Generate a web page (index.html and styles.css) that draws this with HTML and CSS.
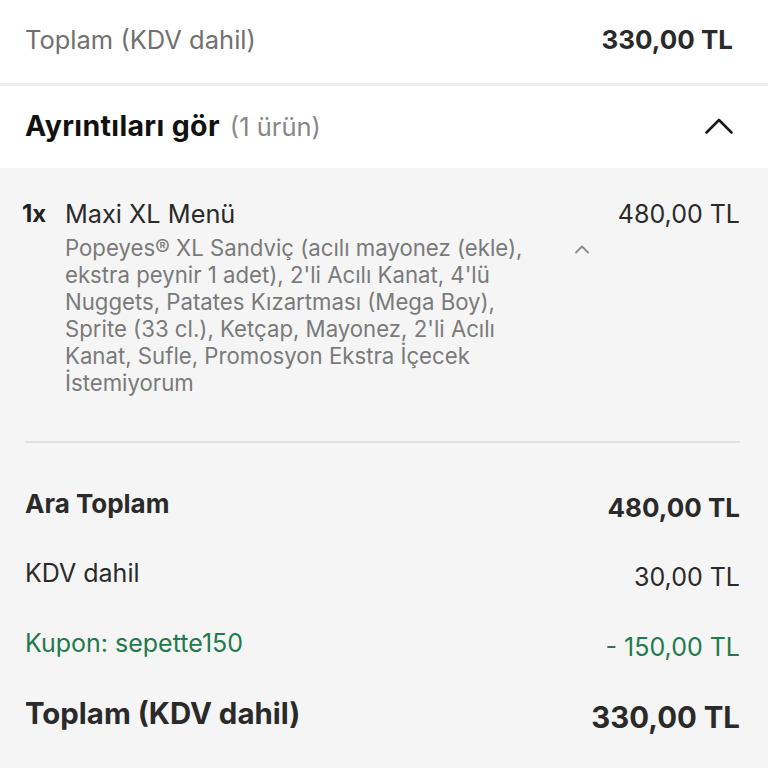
FILE: index.html
```html
<!DOCTYPE html>
<html lang="tr">
<head>
<meta charset="utf-8">
<link rel="stylesheet" href="styles.css">
</head>
<body>
<div class="page">
  <div class="top-row">
    <span class="top-label">Toplam (KDV dahil)</span>
    <span class="top-value">330,00 TL</span>
  </div>
  <div class="details-head">
    <div class="details-title"><span class="dt-strong">Ayrıntıları gör</span> <span class="dt-count">(1 ürün)</span></div>
    <svg class="chev-big" width="30" height="18" viewBox="0 0 30 18"><path d="M2.5 15.5 L15 3 L27.5 15.5" fill="none" stroke="#1a1a1a" stroke-width="2.6" stroke-linecap="round" stroke-linejoin="round"/></svg>
  </div>
  <div class="gray">
    <div class="item">
      <span class="qty">1x</span>
      <div class="item-body">
        <div class="item-name">Maxi XL Menü</div>
        <div class="item-desc-row">
          <div class="item-desc">Popeyes® XL Sandviç (acılı mayonez (ekle), ekstra peynir 1 adet), 2'li Acılı Kanat, 4'lü Nuggets, Patates Kızartması (Mega Boy), Sprite (33 cl.), Ketçap, Mayonez, 2'li Acılı Kanat, Sufle, Promosyon Ekstra İçecek İstemiyorum</div>
          <svg class="chev-small" width="18" height="12" viewBox="0 0 18 12"><path d="M3 9.5 L9 3.5 L15 9.5" fill="none" stroke="#8a8a8a" stroke-width="1.8" stroke-linecap="round" stroke-linejoin="round"/></svg>
        </div>
      </div>
      <span class="item-price">480,00 TL</span>
    </div>
    <div class="divider"></div>
    <div class="sum-row bold"><span>Ara Toplam</span><span class="val">480,00 TL</span></div>
    <div class="sum-row"><span>KDV dahil</span><span class="val">30,00 TL</span></div>
    <div class="sum-row green"><span>Kupon: sepette150</span><span class="val">- 150,00 TL</span></div>
    <div class="sum-row total"><span>Toplam (KDV dahil)</span><span class="val">330,00 TL</span></div>
  </div>
</div>
</body>
</html>
```
FILE: styles.css
```css
html, body {
  margin: 0;
  padding: 0;
  background: #f5f5f5;
}
body {
  font-family: Inter, Roboto, "Liberation Sans", sans-serif;
  color: #222;
  width: 768px;
  height: 768px;
  overflow: hidden;
}
.page {
  display: flex;
  flex-direction: column;
}
.top-row {
  background: #fff;
  height: 86px;
  display: flex;
  align-items: center;
  justify-content: space-between;
  padding: 0 35px 4px 25px;
  border-bottom: 3px solid #ececec;
  box-sizing: border-box;
}
.top-label {
  font-size: 25.5px;
  color: #707070;
}
.top-value {
  font-size: 26px;
  font-weight: 700;
  color: #2a2a2a;
}
.details-head {
  background: #fff;
  height: 82px;
  display: flex;
  align-items: center;
  justify-content: space-between;
  padding: 0 34px 4px 25px;
  box-sizing: border-box;
}
.details-title {
  font-size: 28.5px;
}
.dt-strong {
  font-weight: 700;
  color: #111;
  letter-spacing: 0.35px;
}
.dt-count {
  color: #888;
  font-size: 25.5px;
  margin-left: 2px;
}
.chev-big {
  margin-top: 2px;
}
.gray {
  background: #f5f5f5;
  padding: 31px 28px 0 25px;
  display: flex;
  flex-direction: column;
}
.item {
  display: flex;
  align-items: flex-start;
}
.qty {
  font-size: 24px;
  font-weight: 700;
  width: 43px;
  line-height: 30px;
  margin-left: -3px;
  color: #222;
}
.item-body {
  flex: 1;
}
.item-name {
  font-size: 25.3px;
  line-height: 30px;
  color: #2a2a2a;
}
.item-desc-row {
  display: flex;
  align-items: flex-start;
}
.item-desc {
  width: 490px;
  font-size: 22.2px;
  line-height: 27px;
  color: #7a7a7a;
  margin-top: 5px;
}
.chev-small {
  margin-left: 18px;
  margin-top: 14px;
}
.item-price {
  font-size: 25px;
  line-height: 30px;
  color: #2a2a2a;
}
.divider {
  height: 2px;
  background: #e0e0e0;
  margin-top: 45px;
  margin-bottom: 25px;
}
.sum-row {
  display: flex;
  justify-content: space-between;
  align-items: center;
  font-size: 25px;
  height: 70px;
  color: #2a2a2a;
}
.sum-row .val {
  padding-top: 8px;
}
.sum-row.bold {
  font-weight: 700;
  font-size: 26px;
}
.sum-row.green {
  color: #1f7a4c;
}
.sum-row.total {
  font-size: 29.4px;
  font-weight: 700;
}
```
